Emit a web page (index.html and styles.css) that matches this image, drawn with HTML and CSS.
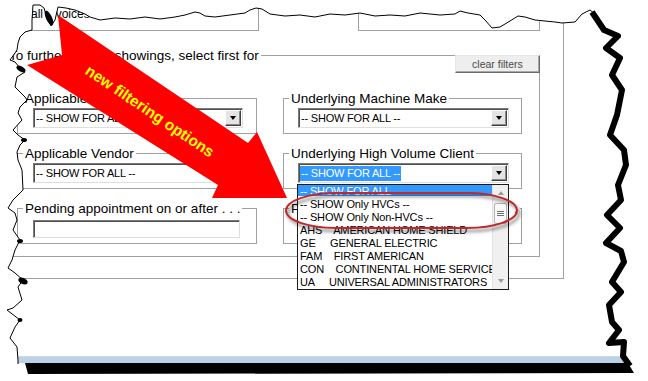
FILE: index.html
```html
<!DOCTYPE html>
<html>
<head>
<meta charset="utf-8">
<link rel="stylesheet" href="styles.css">
</head>
<body>
<div class="page">
  <div class="outer">
    <div class="toprow">
      <div class="topbox topbox-a">all invoices</div>
      <div class="topbox topbox-b"></div>
    </div>
    <div class="group filters">
      <div class="group-head">
        <span class="group-title">To further narrow showings, select first for</span>
        <button class="btn">clear filters</button>
      </div>
      <div class="grid">
        <div class="group cell">
          <span class="group-title">Applicable Technician</span>
          <div class="select"><span class="select-text">-- SHOW FOR ALL --</span><span class="select-btn"><i class="tri-down"></i></span></div>
        </div>
        <div class="group cell">
          <span class="group-title">Underlying Machine Make</span>
          <div class="select"><span class="select-text">-- SHOW FOR ALL --</span><span class="select-btn"><i class="tri-down"></i></span></div>
        </div>
        <div class="group cell">
          <span class="group-title">Applicable Vendor</span>
          <div class="select"><span class="select-text">-- SHOW FOR ALL --</span><span class="select-btn"><i class="tri-down"></i></span></div>
        </div>
        <div class="group cell">
          <span class="group-title">Underlying High Volume Client</span>
          <div class="select"><span class="select-text"><span class="sel-hl">-- SHOW FOR ALL --</span></span><span class="select-btn"><i class="tri-down"></i></span></div>
          <div class="list">
            <div class="list-items">
              <div class="opt hl">-- SHOW FOR ALL --</div>
              <div class="opt">-- SHOW Only HVCs --</div>
              <div class="opt">-- SHOW Only Non-HVCs --</div>
              <div class="opt">AHS    AMERICAN HOME SHIELD</div>
              <div class="opt">GE     GENERAL ELECTRIC</div>
              <div class="opt">FAM    FIRST AMERICAN</div>
              <div class="opt">CON    CONTINENTAL HOME SERVICE</div>
              <div class="opt">UA     UNIVERSAL ADMINISTRATORS</div>
            </div>
            <div class="scroll">
              <div class="sb-btn"><i class="tri-up"></i></div>
              <div class="sb-thumb"><i class="grip"></i></div>
              <div class="sb-space"></div>
              <div class="sb-btn"><i class="tri-down gray"></i></div>
            </div>
          </div>
        </div>
        <div class="group cell">
          <span class="group-title">Pending appointment on or after . . .</span>
          <div class="input"></div>
        </div>
        <div class="group cell">
          <span class="group-title">Pending appointment on or before . . .</span>
          <div class="input"></div>
        </div>
      </div>
    </div>
  </div>
  <div class="statusbar"></div>

  <svg class="overlay" width="648" height="381" viewBox="0 0 648 381">
    <defs>
      <filter id="soft" x="-10%" y="-50%" width="120%" height="200%"><feGaussianBlur stdDeviation="1.6"/></filter>
    </defs>
    <path fill="#fff" fill-rule="evenodd" d="M0 0H648V381H0Z M33,5 L40,5 L44,8 L47,18 L51,26 L55,20 L58,7 L66,8 L75,10 L85,14 L90,17 L100,20 L115,18 L130,19 L145,17 L160,19 L175,17 L185,15 L195,12 L200,13 L205,16 L215,17 L230,15 L245,13 L250,10 L256,8 L262,9 L270,14 L285,16 L300,15 L315,17 L330,14 L345,15 L360,13 L375,16 L390,15 L405,16 L420,13 L440,15 L455,14 L460,11 L468,13 L480,15 L485,20 L492,28 L500,27 L510,21 L518,16 L525,17 L535,20 L545,21 L555,22 L562,23 L575,22 L582,14 L590,10 L595,14 L607,30 L620,35 L606,48 L620,58 L612,75 L622,90 L617,115 L610,135 L624,150 L628,165 L618,185 L622,200 L606,215 L620,228 L605,243 L622,250 L626,262 L612,282 L622,292 L608,305 L612,322 L620,330 L608,343 L626,340 L624,356 L628,364 L18,364 L18,360 L17,347 L10,338 L15,327 L20,320 L7,310 L13,308 L22,300 L18,287 L23,280 L15,273 L8,268 L12,260 L15,250 L20,240 L13,230 L17,220 L15,213 L8,208 L13,200 L23,190 L22,170 L18,160 L17,152 L20,145 L25,140 L18,135 L13,130 L22,120 L18,113 L20,107 L27,100 L25,97 L20,92 L15,87 L17,77 L25,72 L20,68 L15,62 L10,60 L15,53 L17,50 L18,43 L20,37 L25,32 L32,30 L32,20 Z"/>
    <path fill="none" stroke="#000" stroke-width="1" d="M33,5 L40,5 L44,8 L47,18 L51,26 L55,20 L58,7 L66,8 L75,10 L85,14 L90,17 L100,20 L115,18 L130,19 L145,17 L160,19 L175,17 L185,15 L195,12 L200,13 L205,16 L215,17 L230,15 L245,13 L250,10 L256,8 L262,9 L270,14 L285,16 L300,15 L315,17 L330,14 L345,15 L360,13 L375,16 L390,15 L405,16 L420,13 L440,15 L455,14 L460,11 L468,13 L480,15 L485,20 L492,28 L500,27 L510,21 L518,16 L525,17 L535,20 L545,21 L555,22 L562,23 L575,22 L582,14 L590,10 L595,14 L607,30 M18,364 L18,360 L17,347 L10,338 L15,327 L20,320 L7,310 L13,308 L22,300 L18,287 L23,280 L15,273 L8,268 L12,260 L15,250 L20,240 L13,230 L17,220 L15,213 L8,208 L13,200 L23,190 L22,170 L18,160 L17,152 L20,145 L25,140 L18,135 L13,130 L22,120 L18,113 L20,107 L27,100 L25,97 L20,92 L15,87 L17,77 L25,72 L20,68 L15,62 L10,60 L15,53 L17,50 L18,43 L20,37 L25,32 L32,30 L32,20 L33,5"/>
    <polyline fill="none" stroke="#000" stroke-width="6" stroke-linejoin="round" points="592,12 604,30 618,36 606,48 620,58 612,75 622,90 617,115 610,135 624,150 626,165 618,185 621,200 607,215 620,228 606,243 621,251 624,262 612,282 621,292 609,305 612,322 619,330 609,343 624,342 623,356 630,366"/>
    <path fill="#000" d="M25,363 L628,363 L634,373 L28,374 Z"/>
    <ellipse cx="49" cy="18" rx="3" ry="8" transform="rotate(-25 49 18)" fill="#000"/>
    <ellipse cx="21" cy="69" rx="5" ry="2.5" transform="rotate(30 21 69)" fill="#000"/>
    <ellipse cx="24" cy="140" rx="3" ry="2" fill="#000"/>
    <ellipse cx="20" cy="241" rx="3" ry="2" fill="#000"/>
    <ellipse cx="23" cy="281" rx="5" ry="3" transform="rotate(25 23 281)" fill="#000"/>
    <ellipse cx="20" cy="320" rx="2.5" ry="2" fill="#000"/>

    <polygon fill="#ff0000" points="58,15 248,143 257,132 287,198 212,198 218,185 27,65 62,55"/>
    <text class="arrow-text" x="150" y="111" transform="rotate(34 150 111)" text-anchor="middle" dominant-baseline="central">new filtering options</text>

    <rect x="288" y="196" width="231" height="35" rx="50" ry="17.5" fill="none" stroke="rgba(0,0,0,0.35)" stroke-width="3" filter="url(#soft)"/>
    <rect x="286" y="193" width="231" height="35" rx="50" ry="17.5" fill="none" stroke="#c0282b" stroke-width="2"/>
  </svg>
</div>
</body>
</html>
```

FILE: styles.css
```css
* { box-sizing: border-box; }
html, body { margin: 0; padding: 0; background: #fff; }
body { font-family: "Liberation Sans", Arial, sans-serif; color: #000; }

.page {
  position: relative;
  width: 648px;
  height: 381px;
  overflow: hidden;
  background: #fff;
}

.outer {
  margin: -10px 0 0 2px;
  width: 562px;
  height: 289px;
  border: 1px solid #a0a0a0;
}

.toprow { display: flex; padding-left: 3px; height: 40px; }
.topbox { height: 40px; border: 1px solid #a0a0a0; border-top: 0; }
.topbox-a { width: 253px; padding: 16px 0 0 24px; font-size: 12px; line-height: 14px; }
.topbox-b { width: 182px; margin-left: 99px; }

.group { border: 1px solid #a0a0a0; }
.filters { margin: 24px 0 0 3px; width: 534px; height: 202px; }

.group-head {
  display: flex;
  justify-content: space-between;
  align-items: flex-start;
  margin: -8px -1px 0 0;
}
.group-title {
  display: block;
  width: fit-content;
  padding: 0 2px;
  background: #fff;
  font-size: 13.5px;
  line-height: 15px;
  white-space: nowrap;
}
.cell > .group-title { margin: -8px 0 0 5px; }

.btn {
  margin-top: 7px;
  width: 85px;
  height: 18px;
  padding: 0;
  border: 1px solid;
  border-color: #e6e6e6 #6a6a6a #6a6a6a #e6e6e6;
  box-shadow: inset -1px -1px 0 #a8a8a8;
  background: #eeeeee;
  font-family: "Liberation Sans", Arial, sans-serif;
  font-size: 10.5px;
  color: #4a4a4a;
}

.grid {
  display: grid;
  grid-template-columns: 240px 239px;
  grid-template-rows: 36px 36px 36px;
  column-gap: 26px;
  row-gap: 19px;
  margin: 25px 0 0 10px;
}
.cell { position: relative; }

.select {
  display: flex;
  align-items: center;
  margin: 2px 0 0 15px;
  width: 210px;
  height: 20px;
  border: 1px solid;
  border-color: #7a7a7a #dedede #dedede #7a7a7a;
  box-shadow: inset 1px 1px 0 #505050;
  background: #fff;
  font-size: 11px;
  letter-spacing: -0.2px;
  white-space: nowrap;
}
.grid > .cell:nth-child(even) .select { margin-left: 14px; width: 211px; }
.select-text { flex: 1; padding-left: 2px; line-height: 15px; padding-top: 1px; }
.sel-hl {
  display: inline-block;
  background: #3399ff;
  color: #fff;
  line-height: 15px;
  padding: 0 1px;
  margin-left: -1px;
}
.select-btn {
  display: flex;
  align-items: center;
  justify-content: center;
  width: 16px;
  height: 16px;
  margin-right: 1px;
  border: 1px solid;
  border-color: #ffffff #404040 #404040 #ffffff;
  box-shadow: inset -1px -1px 0 #8a8a8a;
  background: #e4e4e4;
}
.tri-down {
  display: block;
  width: 0;
  height: 0;
  border-left: 3.5px solid transparent;
  border-right: 3.5px solid transparent;
  border-top: 4px solid #000;
}
.tri-down.gray { border-top-color: #9a9a9a; }
.tri-up {
  display: block;
  width: 0;
  height: 0;
  border-left: 3.5px solid transparent;
  border-right: 3.5px solid transparent;
  border-bottom: 4px solid #9a9a9a;
}

.input {
  margin: 4px 0 0 15px;
  width: 207px;
  height: 18px;
  border: 1px solid;
  border-color: #7a7a7a #dedede #dedede #7a7a7a;
  box-shadow: inset 1px 1px 0 #505050;
  background: #fff;
}
.grid > .cell:nth-child(even) .input { margin-left: 14px; }

.list {
  position: absolute;
  left: 13px;
  top: 30px;
  z-index: 10;
  display: flex;
  width: 212px;
  height: 106px;
  border: 1px solid #1a1a1a;
  background: #fff;
  overflow: hidden;
  font-size: 11px;
  letter-spacing: -0.15px;
}
.list-items { flex: 1; overflow: hidden; margin-top: -2px; }
.opt {
  height: 13px;
  line-height: 16px;
  padding-left: 2px;
  white-space: pre;
}
.opt.hl { background: #3399ff; color: #fff; }

.scroll {
  display: flex;
  flex-direction: column;
  width: 16px;
  background: #f0f0f0;
  border-left: 1px solid #e2e2e2;
}
.sb-btn { height: 16px; display: flex; align-items: center; justify-content: center; }
.sb-thumb {
  margin: 2px 1px 0 1px;
  height: 21px;
  border: 1px solid #b4b4b4;
  border-radius: 2px;
  background: #f9f9f9;
  display: flex;
  align-items: center;
  justify-content: center;
}
.grip {
  display: block;
  width: 7px;
  height: 5px;
  border-top: 1px solid #707070;
  border-bottom: 1px solid #707070;
  background: linear-gradient(#707070, #707070) center / 100% 1px no-repeat;
}
.sb-space { flex: 1; }

.statusbar {
  margin-top: 77px;
  height: 7px;
  border-top: 1px solid #d8d8d8;
  background: #b9d1ea;
}

.overlay {
  position: absolute;
  left: 0;
  top: 0;
  z-index: 20;
  pointer-events: none;
}
.arrow-text {
  font-family: "Liberation Sans", Arial, sans-serif;
  font-weight: bold;
  font-size: 15.5px;
  fill: #ffff00;
}
```
